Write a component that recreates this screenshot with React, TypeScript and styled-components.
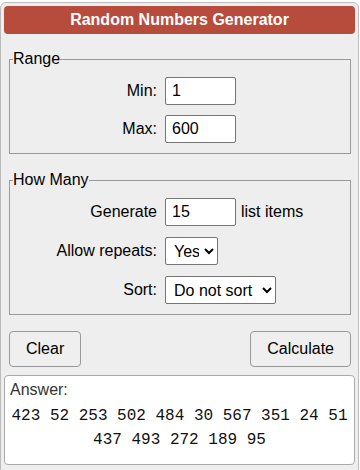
import styled, { createGlobalStyle } from "styled-components";

const GlobalStyle = createGlobalStyle`
  body {
    margin: 0;
    background: #fff;
    font-family: "Liberation Sans", Arial, sans-serif;
    font-size: 16px;
    color: #000;
  }
`;

const numbers = [423, 52, 253, 502, 484, 30, 567, 351, 24, 51, 437, 493, 272, 189, 95];

const App = () => {
  return (
    <>
      <GlobalStyle />
      <Panel>
        <Title>Random Numbers Generator</Title>

        <Group>
          <Legend>Range</Legend>
          <Fields $gap={10}>
            <Label>Min:</Label>
            <TextInput defaultValue="1" />
            <Label>Max:</Label>
            <TextInput defaultValue="600" />
          </Fields>
        </Group>

        <Group $top={17}>
          <Legend>How Many</Legend>
          <Fields $gap={11}>
            <Label>Generate</Label>
            <Inline>
              <TextInput defaultValue="15" />
              <span>list items</span>
            </Inline>
            <Label>Allow repeats:</Label>
            <Select $width={53} defaultValue="yes">
              <option value="yes">Yes</option>
              <option value="no">No</option>
            </Select>
            <Label>Sort:</Label>
            <Select $width={111} defaultValue="none">
              <option value="none">Do not sort</option>
              <option value="asc">Low to high</option>
              <option value="desc">High to low</option>
            </Select>
          </Fields>
        </Group>

        <Actions>
          <Button>Clear</Button>
          <Button>Calculate</Button>
        </Actions>

        <Answer>
          <AnswerLabel>Answer:</AnswerLabel>
          <Result>{numbers.join(" ")}</Result>
        </Answer>
      </Panel>
    </>
  );
};

export default App;

const Panel = styled.div`
  box-sizing: border-box;
  width: 359px;
  margin-top: 2px;
  padding: 3px 3px 20px;
  background: #eeeeee;
  border: 1px solid #bbbbbb;
  border-radius: 6px;
`;

const Title = styled.div`
  height: 28px;
  line-height: 28px;
  background: #b84c3c;
  color: #fff;
  font-weight: bold;
  font-size: 16px;
  text-align: center;
  border-radius: 4px;
`;

const Group = styled.fieldset<{ $top?: number }>`
  margin: ${(p) => p.$top ?? 16}px 4px 0 5px;
  padding: 9px 0 10px;
  border: 1px solid #999999;
  min-width: 0;
`;

const Legend = styled.legend`
  margin-left: 3px;
  padding: 0;
  line-height: 18px;
  font-size: 16px;
`;

const Fields = styled.div<{ $gap: number }>`
  display: grid;
  grid-template-columns: 147px auto;
  column-gap: 8px;
  row-gap: ${(p) => p.$gap}px;
  align-items: center;
  justify-items: start;
`;

const Label = styled.label`
  justify-self: end;
  line-height: 18px;
`;

const Inline = styled.div`
  display: flex;
  align-items: center;
  gap: 5px;
`;

const TextInput = styled.input`
  box-sizing: border-box;
  width: 71px;
  height: 28px;
  padding: 0 5px 0 6px;
  border: 1px solid #767676;
  border-radius: 2px;
  background: #fff;
  font-family: "Liberation Sans", Arial, sans-serif;
  font-size: 16px;
  color: #000;
`;

const Select = styled.select<{ $width: number }>`
  box-sizing: border-box;
  width: ${(p) => p.$width}px;
  height: 28px;
  padding: 0 2px 0 4px;
  border: 1px solid #767676;
  border-radius: 2px;
  background: #fff;
  font-family: "Liberation Sans", Arial, sans-serif;
  font-size: 16px;
  color: #000;
`;

const Actions = styled.div`
  display: flex;
  justify-content: space-between;
  margin: 16px 4px 0 5px;
`;

const Button = styled.button`
  box-sizing: border-box;
  height: 36px;
  padding: 0 16px;
  border: 1px solid #999999;
  border-radius: 4px;
  background: #efefef;
  font-family: "Liberation Sans", Arial, sans-serif;
  font-size: 16px;
  color: #000;
`;

const Answer = styled.div`
  margin-top: 8px;
  padding: 5px 5px 12px;
  background: #fff;
  border: 1px solid #aaaaaa;
  border-radius: 4px;
`;

const AnswerLabel = styled.div`
  line-height: 18px;
  color: #333;
`;

const Result = styled.div`
  margin-top: 5px;
  font-family: "Liberation Mono", "Courier New", monospace;
  font-size: 16px;
  line-height: 24px;
  text-align: center;
  color: #111;
`;
